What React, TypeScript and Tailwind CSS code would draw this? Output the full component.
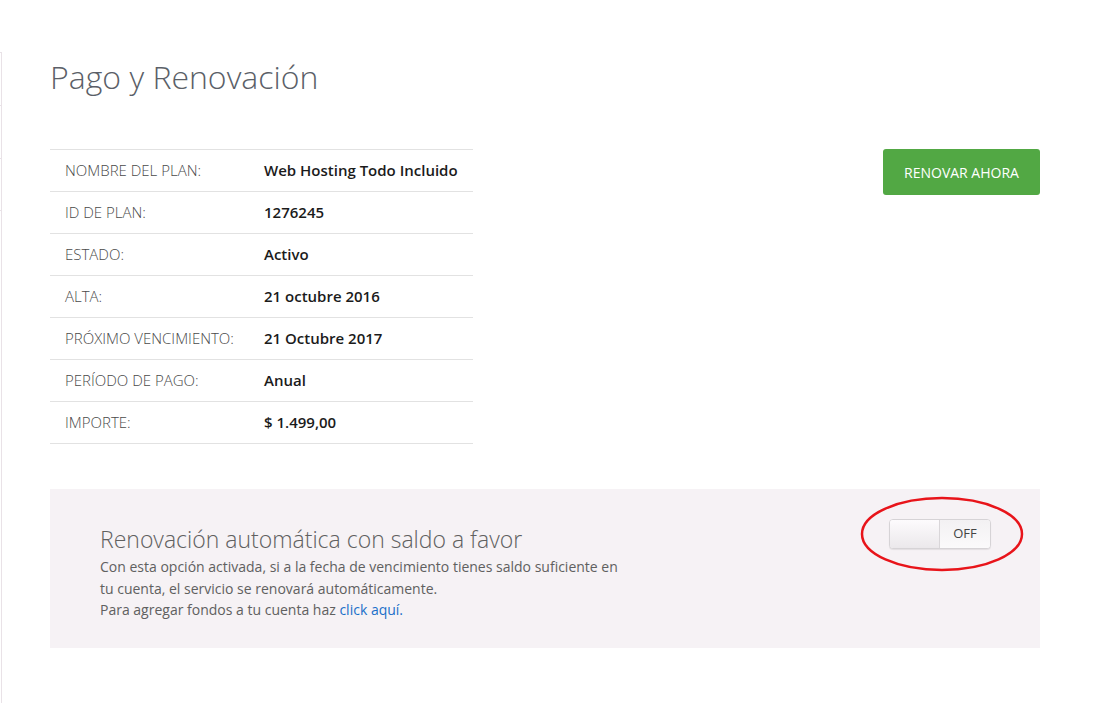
import React from "react"

const rows = [
  { label: "Nombre del plan:", value: "Web Hosting Todo Incluido" },
  { label: "ID de plan:", value: "1276245" },
  { label: "Estado:", value: "Activo" },
  { label: "Alta:", value: "21 octubre 2016" },
  { label: "Próximo vencimiento:", value: "21 Octubre 2017" },
  { label: "Período de pago:", value: "Anual" },
  { label: "Importe:", value: "$ 1.499,00" },
]

function Toggle() {
  return (
    <div className="relative">
      <div className="flex h-[30px] w-[102px] overflow-hidden rounded-[4px] border border-[#d6d3d6] bg-white shadow-[0_1px_1px_rgba(0,0,0,0.08)]">
        <div className="w-[50px] border-r border-[#d9d6d9] bg-gradient-to-b from-[#fdfbfd] to-[#ebe8eb]" />
        <div className="flex flex-1 items-center justify-center bg-gradient-to-b from-[#f3f1f3] to-[#fbfafb] text-[13px] text-[#444]">
          OFF
        </div>
      </div>
      {/* hand-drawn highlight around the switch */}
      <svg
        className="pointer-events-none absolute left-[-30px] top-[-24px]"
        width="166"
        height="78"
        viewBox="0 0 166 78"
      >
        <ellipse cx="83" cy="39" rx="80" ry="36" fill="none" stroke="#e8141a" strokeWidth="2.5" />
      </svg>
    </div>
  )
}

export default function App() {
  return (
    <div className="flex min-h-[703px] bg-white font-['Open_Sans',sans-serif]">
      <div className="w-[2px] pt-[52px]">
        <div className="flex h-full flex-col border-r border-[#e9e2e7]">
          <div className="h-[53px] border-t border-[#e9e2e7]" />
          <div className="h-[53px] border-t border-[#e9e2e7]" />
          <div className="h-[52px] border-t border-[#e9e2e7]" />
          <div className="h-[52px] border-t border-[#e9e2e7]" />
        </div>
      </div>

      <div className="ml-[48px] w-[990px] pt-[57px]">
        <h1 className="text-[32px] font-light leading-[40px] text-[#5b5f68]">Pago y Renovación</h1>

        <div className="mt-[52px] flex items-start justify-between">
          <div className="w-[423px] border-t border-[#e2e2e2]">
            {rows.map((row) => (
              <div key={row.label} className="flex h-[42px] items-center border-b border-[#e2e2e2] text-[15px]">
                <div className="w-[199px] pl-[15px] font-light uppercase text-[#4a4a4a]">{row.label}</div>
                <div className="pl-[15px] font-semibold text-[#1b1b1b]">{row.value}</div>
              </div>
            ))}
          </div>

          <button className="h-[46px] w-[157px] rounded-[3px] bg-[#52a844] text-[14px] uppercase text-white">
            Renovar ahora
          </button>
        </div>

        <div className="mt-[45px] flex h-[159px] items-start justify-between bg-[#f6f2f5] pl-[50px] pr-[49px]">
          <div className="pt-[35px]">
            <h2 className="text-[23px] font-light leading-[30px] text-[#606060]">
              Renovación automática con saldo a favor
            </h2>
            <p className="mt-[2px] text-[14px] leading-[21.5px] text-[#606060]">
              Con esta opción activada, si a la fecha de vencimiento tienes saldo suficiente en
              <br />
              tu cuenta, el servicio se renovará automáticamente.
              <br />
              Para agregar fondos a tu cuenta haz{" "}
              <a href="#" className="text-[#1a6fc9]">
                click aquí.
              </a>
            </p>
          </div>
          <div className="pt-[30px]">
            <Toggle />
          </div>
        </div>
      </div>
    </div>
  )
}
